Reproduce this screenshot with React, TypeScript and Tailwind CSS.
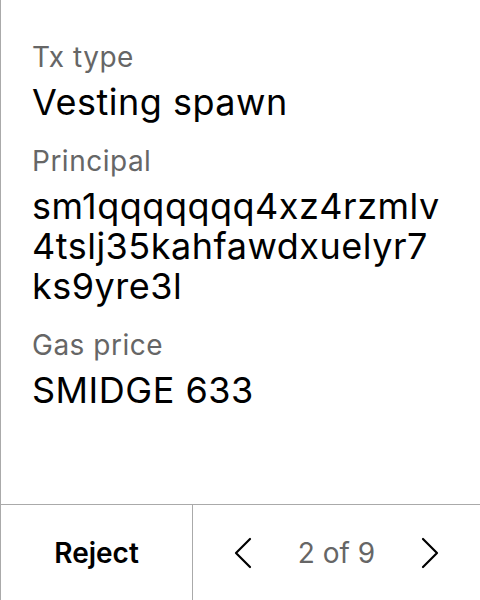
import React from "react";

function Field({ label, value }: { label: string; value: string }) {
  return (
    <div className="flex flex-col gap-[8px]">
      <div className="text-[28px] leading-[34px] tracking-[0.5px] text-[#666666]">{label}</div>
      <div className="text-[36px] leading-[40px] tracking-[0.5px] text-black break-all">{value}</div>
    </div>
  );
}

export default function App() {
  return (
    <div
      className="w-[480px] h-[600px] bg-white flex flex-col border-l border-[#aaaaaa]"
      style={{ fontFamily: "Inter, 'Noto Sans', sans-serif" }}
    >
      <div className="flex-1 flex flex-col gap-[22px] pl-[31px] pr-[32px] pt-[40px]">
        <Field label="Tx type" value="Vesting spawn" />
        <Field label="Principal" value="sm1qqqqqqq4xz4rzmlv4tslj35kahfawdxuelyr7ks9yre3l" />
        <Field label="Gas price" value="SMIDGE 633" />
      </div>
      <div className="h-[96px] flex border-t border-[#aaaaaa]">
        <div className="w-[192px] flex items-center justify-center border-r border-[#aaaaaa] text-[28px] font-semibold text-black">
          Reject
        </div>
        <div className="flex-1 flex items-center justify-between pl-[40px] pr-[40px]">
          <svg width="20" height="32" viewBox="0 0 20 32" fill="none" stroke="black" strokeWidth="2.2" strokeLinecap="round" strokeLinejoin="round">
            <path d="M17 2 L3 16 L17 30" />
          </svg>
          <span className="text-[28px] text-[#666666]">2 of 9</span>
          <svg width="20" height="32" viewBox="0 0 20 32" fill="none" stroke="black" strokeWidth="2.2" strokeLinecap="round" strokeLinejoin="round">
            <path d="M3 2 L17 16 L3 30" />
          </svg>
        </div>
      </div>
    </div>
  );
}
